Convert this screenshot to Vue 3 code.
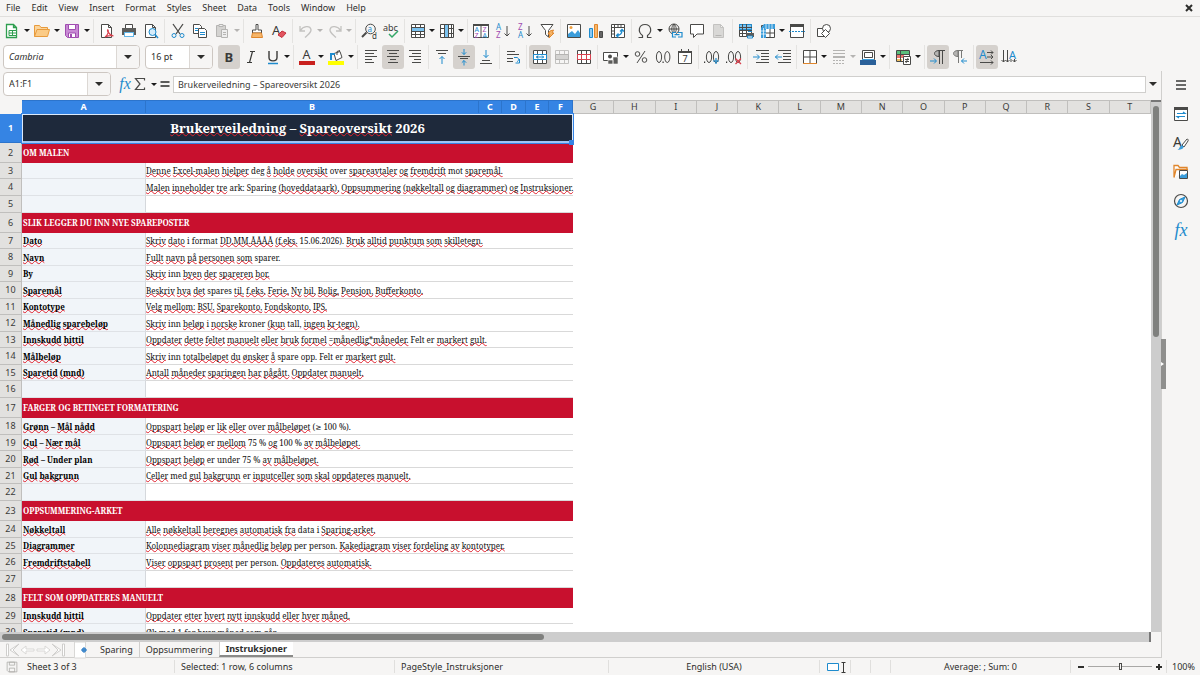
<script setup>
import { ref } from 'vue'

const menus = ['File', 'Edit', 'View', 'Insert', 'Format', 'Styles', 'Sheet', 'Data', 'Tools', 'Window', 'Help']

const g = 'fill="none" stroke="#4a4a48"'
const b = 'fill="none" stroke="#1e8bcd"'
const lines = (xs) => xs.map(([x, w], i) => `M${x} ${1.5 + i * 3}h${w}`).join('')
const grid = (c = '#4a4a48') => `<path fill="none" stroke="${c}" d="M1.5 1.5h13v13h-13zM1.5 5.5h13M1.5 10.5h13M5.5 1.5v13M10.5 1.5v13"/>`
const glyph = (t, x, y, s, c, w = 400) => `<text x="${x}" y="${y}" font-size="${s}" fill="${c}" font-weight="${w}" font-family="Noto Sans, sans-serif">${t}</text>`
const page = '<path fill="#fff" stroke="#4a4a48" d="M2.5 1.5h7l3 3v10h-10zM9.5 1.5v3h3"/>'
const arrowDown = (x) => `<path ${g} d="M${x} 3v10M${x - 2.5} 10.5l2.5 2.5 2.5-2.5"/>`

const icons = {
  new: '<path fill="#fff" stroke="#2e9e4f" stroke-width="1.3" d="M2.5 1.5h7l3 3v10h-10zM9.5 1.5v3h3"/><path fill="#fff" stroke="#2e9e4f" d="M5 7.5h7.5v5H5zM5 10h7.5M8.5 7.5v5"/>',
  open: '<path fill="#fbd49a" stroke="#e89b3c" d="M.5 13.500V2.500h5l1.500 2h6.500v2"/><path fill="#fbcb86" stroke="#e89b3c" d="M3 6.500h12.500l-2 7H.5z"/>',
  save: '<path fill="#c88ad4" stroke="#a04cb0" d="M1.500 1.500h13v13h-11l-2-2z"/><path fill="#fff" stroke="#a04cb0" d="M4.500 1.500h7v5h-7zM4.500 10h7v4.500h-7z"/><path fill="#a04cb0" d="M6 11h2v3H6z"/>',
  pdf: page + '<path fill="none" stroke="#d9414e" stroke-width="1.200" d="M6 14c3-2 4-6 3-7s-1 4 5.500 6c-3-1-6 0-8.500 1z"/>',
  print: '<path fill="#fff" stroke="#4a4a48" d="M4.500 1.500h7v4h-7z"/><path fill="#5c5c5a" d="M1 5h14v7H1z"/><path fill="#62b6e8" d="M3 9h10v5H3z"/><path fill="#fff" d="M4 10h8v3H4z"/>',
  preview: page + '<circle cx="9.500" cy="9" r="3.500" fill="#d6ecfa" stroke="#1e8bcd"/><path stroke="#1e8bcd" stroke-width="1.500" d="M12 11.500l3 3.500"/>',
  cut: `<path ${g} stroke-width="1.300" d="M3 1l7 10M13 1L6 11"/><circle cx="4" cy="12.500" r="2" ${b}/><circle cx="12" cy="12.500" r="2" ${b}/>`,
  copy: '<path fill="#fff" stroke="#4a4a48" d="M1.500 1.500h6l2 2v7h-8z"/><path fill="#fff" stroke="#4a4a48" d="M6.500 5.500h6l2 2v7h-8z"/><path stroke="#1e8bcd" d="M3 5.500h3M3 7.500h3M8 9.500h5M8 11.500h5"/>',
  paste: '<path fill="#d4d3d1" stroke="#b5b4b2" d="M2.500 2.500h9v11h-9z"/><path fill="#eee" stroke="#b5b4b2" d="M5 1.500h4v2H5zM7.500 6.500h6v8h-6z"/><path stroke="#b5b4b2" d="M9 9.500h3M9 11.500h3"/>',
  brush: '<path fill="#fff" stroke="#4a4a48" d="M7 1.500h2V7h3.500v3h-9V7H7z"/><path fill="#f6b66a" stroke="#e0862c" d="M3.500 10h9l1 4.500h-11z"/>',
  clear: `${glyph('A', 1, 12, 13, '#3a3a38')}<path fill="#e2545f" stroke="#c4303c" d="M7 12l4-4 4 2-4 4.500z"/>`,
  undo: '<path fill="none" stroke="#c3c2c0" stroke-width="1.300" d="M2 3v5h5M2.500 7.500C5 3 12 2 13 6.500c.5 3-3 5-6 8"/>',
  redo: '<path fill="none" stroke="#c3c2c0" stroke-width="1.300" d="M14 3v5H9M13.500 7.500C11 3 4 2 3 6.500c-.5 3 3 5 6 8"/>',
  find: `<circle cx="9.500" cy="6" r="4.800" ${g}/><path stroke="#4a4a48" stroke-width="2" d="M5.500 9.500L1 14"/>${glyph('a', 6.600, 8.500, 8, '#1e8bcd')}${glyph('d', 11, 15.500, 8, '#3a3a38')}`,
  spell: `${glyph('abc', 0, 7.500, 9, '#3a3a38')}<path fill="none" stroke="#33a867" stroke-width="1.500" d="M6 11l3 3 6-6"/>`,
  row: '<path fill="#fff" d="M1 1h14v14H1z"/><path fill="#7cc3f0" d="M1 4h14v5H1z"/><path fill="none" stroke="#4a4a48" d="M1.500 1.500h13v13h-13zM1.500 4.500h13M1.500 8.500h13M1.500 11.500h13M5.500 1.500v3M10.500 1.500v3M5.500 8.500v6M10.500 8.500v6"/>',
  column: '<path fill="#fff" d="M1 1h14v14H1z"/><path fill="#7cc3f0" d="M5 1h5v14H5z"/><path fill="none" stroke="#4a4a48" d="M1.500 1.500h13v13h-13zM5.500 1.500v13M9.500 1.500v13M12.500 1.500v13M1.500 5.500h4M1.500 10.500h4M9.500 5.500h5M9.500 10.500h5"/>',
  sort: `<path fill="#fff" stroke="#4a4a48" d="M.5 1.500h15v13H.5zM8 1v14"/><path fill="#4a4a48" d="M0 1h16v2H0z"/>${glyph('A', 1.500, 8.500, 7, '#1e8bcd')}${glyph('Z', 1.500, 14.500, 7, '#a04cb0')}${glyph('Z', 9.500, 8.500, 7, '#a04cb0')}${glyph('A', 9.500, 14.500, 7, '#1e8bcd')}`,
  asc: `${glyph('A', 1, 7, 8, '#1e8bcd')}${glyph('Z', 1, 15, 8, '#a04cb0')}${arrowDown(12)}`,
  desc: `${glyph('Z', 1, 7, 8, '#a04cb0')}${glyph('A', 1, 15, 8, '#1e8bcd')}${arrowDown(12)}`,
  filter: `<path fill="#fff" stroke="#4a4a48" d="M2 1.500h12L9.500 7.500V14l-3-2.500v-4z"/><path fill="#f6b66a" stroke="#e0862c" d="M11 8l3.500-1-1.500 3h2l-5 5 1-4H9z"/>`,
  image: '<path fill="#fff" stroke="#4a4a48" d="M1.500 1.500h13v13h-13z"/><path fill="#3b9ddb" d="M2 14v-3l4-3 3 3 3-4 2 3v4z"/><circle cx="5" cy="4.500" r="1.500" fill="#f0a040"/>',
  chart: '<path fill="#8cc8f0" stroke="#1e8bcd" d="M1.500 5.500h3v9h-3z"/><path fill="#f6b66a" stroke="#e0862c" d="M6.500 1.500h3v13h-3z"/><path fill="#666" stroke="#4a4a48" d="M11.500 8.500h3v6h-3z"/>',
  pivot: '<path fill="#fff" stroke="#4a4a48" d="M1.500 1.500h13v13h-13zM1.500 4.500h13M4.500 1.500v13M8 1.500v3M11 1.500v3M1.500 8h3M1.500 11h3"/><path fill="none" stroke="#1e8bcd" stroke-width="1.300" d="M6.500 12.500c4 0 5.500-2 5.500-5.500M10 8.500L12 6.500 14 8.500M8.500 10.500l-2 2 2 2"/>',
  omega: `<path ${g} stroke-width="1.200" d="M1.500 14.500h4v-2C.5 9 1.500 1.500 8 1.500s7.500 7.500 2.500 11v2h4"/>`,
  link: `<circle cx="7" cy="6" r="5" ${g}/><path ${g} d="M2 6h10M7 1v10M7 1c-3 3-3 7 0 10M7 1c3 3 3 7 0 10"/><path fill="#f6f5f4" stroke="#1e8bcd" stroke-width="1.200" d="M9 9.500H5.500v4.500H9M11 9.500h4v4.500h-4M7.500 11.700h5"/>`,
  comment: '<path fill="#fff" stroke="#4a4a48" d="M1.500 1.500h13v9.500H8l-3.500 3.500V11h-3z"/>',
  header: '<path fill="#d9d8d6" stroke="#c3c2c0" d="M2.500 1.500h7l3 3v10h-10zM9.500 1.500v3h3"/><path stroke="#b5b4b2" d="M4.500 12.500h6"/>',
  range: '<path fill="#fff" stroke="#4a4a48" d="M1.500 1.500h12v12h-12z"/><path fill="#7cc3f0" stroke="#1e8bcd" d="M1.500 1.500h12v5h-12z"/><path stroke="#4a4a48" d="M1 4.500h13M1 7.500h13M1 10.500h13M4.500 1v13M8.500 1v13"/><path fill="#5c5c5a" d="M8 10h8v4H8z"/><path fill="#fff" stroke="#1e8bcd" d="M10 8.500h4M9.500 13h5v2h-5z"/>',
  freeze: '<path fill="#fff" stroke="#4a4a48" d="M1.500 2.500h13v12h-13zM5.500 6v9M10 6v9M2 10h13"/><path fill="#3b9ddb" d="M4 1h11v5H6v9H1V5z"/><path stroke="#fff" stroke-width=".7" d="M6 1v5M9 1v5M12 1v5M1 8h5M1 11h5M3.500 5v10"/>',
  split: `<path fill="#fff" stroke="#4a4a48" d="M1.500 1.500h13v13h-13z"/><path fill="#4a4a48" d="M1 1h14v3H1z"/><path stroke="#1e8bcd" stroke-dasharray="2 1" d="M0 8.500h16"/>`,
  shapes: '<path fill="#fff" stroke="#4a4a48" d="M1.500 5.500h8v8h-8z"/><circle cx="10.500" cy="5.500" r="4" fill="#fff" stroke="#4a4a48"/><path fill="#fff" stroke="#4a4a48" d="M9.500 6.500l4 4-4 4-4-4z"/>',
  bold: glyph('B', 3.500, 13, 13, '#3a3a38', 700),
  italic: '<path fill="none" stroke="#3a3a38" stroke-width="1.200" d="M7 2.500h5M4 13.500h5M9.500 2.500l-3 11"/>',
  underline: '<path fill="none" stroke="#3a3a38" stroke-width="1.400" d="M4 2v6.500c0 4.500 8 4.500 8 0V2"/><path stroke="#1e8bcd" stroke-width="1.500" d="M3 14.500h10"/>',
  color: `${glyph('A', 3.500, 10, 12.500, '#3a3a38')}<path fill="#c9211e" d="M0 12h16v4H0z"/>`,
  highlight: '<path fill="#ffff00" d="M0 12h16v4H0z"/><path fill="#fff" stroke="#4a4a48" d="M6 4.500l6-2 2 6-6 3z"/><path fill="none" stroke="#4a4a48" d="M9 6V2.500l3-1"/><path fill="none" stroke="#1e8bcd" stroke-width="2" d="M3 11V5h4"/>',
  left: `<path ${g} d="${lines([[2, 12], [2, 9], [2, 12], [2, 7], [2, 9]])}"/>`,
  center: `<path ${g} d="${lines([[2, 12], [4, 8], [2, 12], [5, 6], [3, 10]])}"/>`,
  right: `<path ${g} d="${lines([[2, 12], [5, 9], [2, 12], [7, 7], [5, 9]])}"/>`,
  top: `<path ${g} d="M2 1.500h12M4 4.500h8"/><path ${b} d="M8 15V7.500M5.500 10L8 7.500l2.500 2.500"/>`,
  middle: `<path ${g} d="M2 7.500h12M4 9.500h8"/><path ${b} d="M8 0v5.500M5.800 3.300L8 5.500l2.200-2.200M8 16.500v-5M5.800 13.700L8 11.500l2.200 2.200"/>`,
  bottom: `<path ${g} d="M4 11.500h8M2 14.500h12"/><path ${b} d="M8 1v7.500M5.500 6L8 8.500 10.500 6"/>`,
  wrap: `<path ${g} d="M2 2.500h8M2 5.500h12M2 9.500h6M2 12.500h6"/><path ${b} d="M9 8.500h3c2 0 2 4 0 4M14.500 10v4h-4"/>`,
  merge: `<path fill="#fff" d="M1 1h14v14H1z"/>${grid()}<path fill="#fff" stroke="#1e8bcd" d="M1.500 5.500h13v5h-13zM4 8h8M6 6.500L4.500 8 6 9.500M10 6.500L11.500 8 10 9.500"/>`,
  mergeOnly: `${grid('#c3c2c0')}<path fill="#d4d3d1" stroke="#b5b4b2" d="M1.500 5.500h13v5h-13z"/>`,
  unmerge: `<path fill="#fff" d="M1 1h14v14H1z"/>${grid()}<path fill="#fff" stroke="#d9414e" d="M1.500 5.500h13v5h-13zM5.500 5.500v5M10.500 5.500v5"/>`,
  currency: '<path fill="#fff" stroke="#4a4a48" d="M.5 3.500h14v8H.5z"/><circle cx="7" cy="7.500" r="2" fill="#4a4a48"/><path fill="#5c5c5a" stroke="#f6f5f4" stroke-width=".6" d="M5 11h5v4H5zM10 8h5v7h-5z"/>',
  percent: `<circle cx="4.500" cy="5" r="2.300" ${g}/><circle cx="11.500" cy="11" r="2.300" ${g}/><path ${g} d="M12 2L4 14"/>`,
  number: `<ellipse cx="4" cy="8" rx="2.600" ry="5.500" ${g}/><ellipse cx="12.300" cy="8" rx="2.600" ry="5.500" ${g}/><path fill="#3a3a38" d="M7.500 12.500h1.200V14H7.500z"/>`,
  date: `<path fill="#fff" stroke="#4a4a48" d="M1.500 2.500h13v12h-13z"/><path fill="#4a4a48" d="M1 2h14v2H1zM4 0h1v3H4zM11 0h1v3h-1z"/>${glyph('7', 5.500, 12.500, 9, '#3a3a38')}`,
  addDecimal: `<path fill="#3a3a38" d="M0 12.500h1.200V14H0z"/><ellipse cx="5" cy="8" rx="2.600" ry="5.500" ${g}/><ellipse cx="12" cy="8" rx="2.600" ry="5.500" ${g}/><path stroke="#1e8bcd" stroke-width="1.200" d="M12 9v6M9 12h6"/>`,
  delDecimal: `<path fill="#3a3a38" d="M0 12.500h1.200V14H0z"/><ellipse cx="5" cy="8" rx="2.600" ry="5.500" ${g}/><ellipse cx="12" cy="8" rx="2.600" ry="5.500" ${g}/><path stroke="#d9414e" stroke-width="1.300" d="M9.500 9.500l5.500 5.500M15 9.500L9.500 15"/>`,
  indent: `<path ${g} d="M3 1.500h13M8 4.500h8M8 7.500h8M8 10.500h8M3 13.500h13"/><path ${b} d="M0 8h6M4 5.500L6.500 8 4 10.500"/>`,
  outdent: `<path ${g} d="M3 1.500h13M8 4.500h8M8 7.500h8M8 10.500h8M3 13.500h13"/><path ${b} d="M0 8h7M3 5.500L.5 8 3 10.500"/>`,
  borders: '<path fill="#fff" stroke="#4a4a48" d="M1.500 1.500h13v13h-13zM8 1.500v13M1.500 8h13"/><path stroke="#e0862c" d="M1 14.500h14"/>',
  lineStyle: '<path stroke="#b5b4b2" d="M2 1.500h12M2 4.500h12"/><path stroke="#b5b4b2" stroke-width="2" d="M2 8h12"/><path stroke="#b5b4b2" stroke-dasharray="2 1" d="M2 11.500h12M2 14.500h12"/>',
  borderColor: '<path fill="#fff" stroke="#4a4a48" d="M2.500 1.500h12v9h-12zM4.500 3.500h8v5h-8z"/><path fill="#2a6099" d="M0 11h16v5H0z"/><path fill="#3b9ddb" d="M2 10h12v1H2z"/>',
  conditional: '<path fill="#fff" stroke="#4a4a48" d="M1.500 1.500h13v11h-13z"/><path fill="#5bbf7c" d="M2 2h12v3H2z"/><path fill="#e8756f" d="M2 6h7v3H2z"/><path fill="#f0c060" d="M2 10h5v2H2z"/><path stroke="#4a4a48" d="M5.500 1v12M1 5.500h13"/><path fill="#fff" stroke="#4a4a48" d="M8.500 7.500h7v8h-7zM10 10.500h4M10 12.500h4M13 9l-2 5"/>',
  ltr: `<path fill="#b5b4b2" stroke="#4a4a48" d="M9 1.500c-6 0-6 6 0 6z"/><path ${g} d="M8 1.500h7M9.500 1.500V15M12.500 1.500V15"/><path ${b} d="M0 12h6M4 9.500L6.500 12 4 14.500"/>`,
  rtl: `<path fill="#b5b4b2" stroke="#7a7a78" d="M6 1.500c-6 0-6 6 0 6z"/><path fill="none" stroke="#7a7a78" d="M5 1.500h6M6.500 1.500V14M9.500 1.500V9"/><path ${b} d="M15 12H9.500M12 9.500L9.500 12l2.500 2.500"/>`,
  horizontal: `${glyph('A', 0, 10, 12, '#1e8bcd')}<path ${g} d="M8 3.500h6M8 8h6M1 13.500h13M12 1.500l2 2-2 2M12 6l2 2-2 2M12 11.500l2 2-2 2"/>`,
  vertical: `${glyph('A', 8, 10, 11, '#1e8bcd')}<path ${g} d="M2.500 1v12M6.500 1v12M13.500 10v3M10 10v3M.500 11l2 2 2-2M4.500 11l2 2 2-2M11.500 11l2 2 2-2"/>`,
  settings: '<path stroke="#3a3a38" stroke-width="1.500" d="M3 4h10M3 8h10M3 12h10"/>',
  properties: '<path fill="#fff" stroke="#4a4a48" d="M1.500 1.500h13v13h-13z"/><path fill="#4a4a48" d="M1 1h14v3H1z"/><path fill="none" stroke="#1e8bcd" stroke-width="1.200" d="M4 7.500h8l-2-1.500M12 10.500H4l2 1.500"/>',
  styles: `${glyph('A', 0, 12, 14, '#3a3a38')}<path fill="#fff" stroke="#4a4a48" d="M9 10l5-6c1 0 1.500 1 1 2l-4 6z"/><path fill="#3b9ddb" d="M4 15c3 0 2-5 5-4.500s2 4.500-5 4.500z"/>`,
  gallery: '<path fill="#fff" stroke="#e0862c" stroke-width="1.300" d="M1 13.500v-12h4l1.500 2H14v2M1 13.500l2-8h12"/><path fill="#fff" stroke="#4a4a48" d="M6.500 6.500h8v8h-8z"/><path fill="#3b9ddb" d="M7 14v-2l2-2 2 1 3-2v5z"/>',
  navigator: `<circle cx="8" cy="8" r="6.500" ${g} stroke-width="1.200"/><path fill="#3b9ddb" stroke="#1e8bcd" d="M12 4L9.500 9.500 4 12l2.500-5.500z"/><circle cx="8" cy="8" r="1" fill="#fff"/>`,
  sum: `<path ${g} stroke-width="1.200" d="M12.500 4.500v-2h-9L8 8l-4.500 5.500h9v-2"/>`,
  equals: '<path stroke="#5c5c5a" stroke-width="2" d="M3.500 6h9M3.500 10h9"/>',
  addSheet: '<path fill="#fff" stroke="#d9d8d6" d="M.5 0h11v16H.5z"/><path stroke="#2f7ec7" stroke-width="1.300" d="M10 5.500v5M7.500 8h5"/><circle cx="10" cy="8" r="2" fill="none" stroke="#2f7ec7"/>',
  disk: '<path fill="none" stroke="#a9a8a6" d="M1.500 1.500h13v13h-11l-2-2zM4.500 1.500h7v4h-7zM4.500 9.500h7v5h-7z"/>',
  first: '<path fill="#fff" stroke="#cfcecc" d="M1.500 2h2v12h-2zM14 2L5 8l9 6-6-6z"/>',
  prev: '<path fill="#fff" stroke="#d9d8d6" d="M1 8l5-4v3h8v2H6v3z"/>',
  next: '<path fill="#fff" stroke="#d9d8d6" d="M15 8l-5-4v3H2v2h8v3z"/>',
  last: '<path fill="#fff" stroke="#cfcecc" d="M12.500 2h2v12h-2zM2 2l9 6-9 6 6-6z"/>',
  selection: '<path fill="#fff" stroke="#1e8bcd" d="M.5 4.500h11v7H.5z"/><path fill="none" stroke="#3a3a38" d="M14.500 3.500h4M14.500 13.500h4M16.500 3.500v10"/>',
}

const I = (icon, label, o = {}) => ({ icon, label, ...o })
const D = (icon, label, o = {}) => I(icon, label, { drop: true, ...o })

const standard = [
  [D('new', 'New'), D('open', 'Open'), D('save', 'Save')],
  [I('pdf', 'Export as PDF'), I('print', 'Print'), I('preview', 'Print Preview')],
  [I('cut', 'Cut'), I('copy', 'Copy'), D('paste', 'Paste', { off: true })],
  [I('brush', 'Clone Formatting'), I('clear', 'Clear Formatting')],
  [D('undo', 'Undo', { off: true, snug: true }), D('redo', 'Redo', { off: true, snug: true })],
  [I('find', 'Find and Replace'), I('spell', 'Spelling')],
  [D('row', 'Row', { snug: true }), D('column', 'Column', { snug: true })],
  [I('sort', 'Sort'), I('asc', 'Sort Ascending'), I('desc', 'Sort Descending'), I('filter', 'AutoFilter')],
  [I('image', 'Insert Image'), I('chart', 'Insert Chart'), I('pivot', 'Pivot Table')],
  [D('omega', 'Special Character'), I('link', 'Hyperlink'), I('comment', 'Comment'), I('header', 'Headers and Footers', { off: true })],
  [I('range', 'Print Range'), D('freeze', 'Freeze Panes', { snug: true }), I('split', 'Split Window')],
  [I('shapes', 'Show Draw Functions')],
]

const formatting = [
  [I('bold', 'Bold', { on: true }), I('italic', 'Italic'), D('underline', 'Underline', { snug: true })],
  [D('color', 'Font Color', { snug: true }), D('highlight', 'Background Color')],
  [I('left', 'Align Left'), I('center', 'Center Horizontally', { on: true }), I('right', 'Align Right')],
  [I('top', 'Align Top'), I('middle', 'Center Vertically', { on: true }), I('bottom', 'Align Bottom')],
  [I('wrap', 'Wrap Text')],
  [I('merge', 'Merge and Center', { on: true }), I('mergeOnly', 'Merge Cells', { off: true }), I('unmerge', 'Unmerge Cells')],
  [D('currency', 'Currency'), I('percent', 'Percent'), I('number', 'Number'), I('date', 'Date')],
  [I('addDecimal', 'Add Decimal Place'), I('delDecimal', 'Delete Decimal Place')],
  [I('indent', 'Increase Indent'), I('outdent', 'Decrease Indent')],
  [D('borders', 'Borders', { snug: true }), D('lineStyle', 'Border Style', { off: true, snug: true }), D('borderColor', 'Border Color')],
  [D('conditional', 'Conditional')],
  [I('ltr', 'Left-To-Right', { on: true }), I('rtl', 'Right-To-Left')],
  [I('horizontal', 'Text Horizontal', { on: true }), I('vertical', 'Text Vertical')],
]

const sidebar = [
  I('settings', 'Sidebar Settings'), I('properties', 'Properties'), I('styles', 'Styles'),
  I('gallery', 'Gallery'), I('navigator', 'Navigator'),
]

const selectedCols = ['A', 'B', 'C', 'D', 'E', 'F']
const otherCols = 'GHIJKLMNOPQRST'.split('')

const known = new Set('deg over mot ark sparing i format sparer inn spares tall kroner spare opp felt er under data med per person by plan'.split(' '))

// Splits a text into runs and flags the words that the spelling checker underlines.
function runs(text) {
  return text.split(/(\s+)/).filter(Boolean).map((t) => {
    const word = t.toLowerCase().replace(/[^a-zæøå.\-"]/g, '').replace(/\.$/, '')
    return { t, typo: /[a-zæøå]/.test(word) && !known.has(word) }
  })
}

const rows = [
  { section: 'OM MALEN' },
  { b: 'Denne Excel-malen hjelper deg å holde oversikt over spareavtaler og fremdrift mot sparemål.' },
  { b: 'Malen inneholder tre ark: Sparing (hoveddataark), Oppsummering (nøkkeltall og diagrammer) og Instruksjoner.' },
  {},
  { section: 'SLIK LEGGER DU INN NYE SPAREPOSTER' },
  { a: 'Dato', b: 'Skriv dato i format DD.MM.ÅÅÅÅ (f.eks. 15.06.2026). Bruk alltid punktum som skilletegn.' },
  { a: 'Navn', b: 'Fullt navn på personen som sparer.' },
  { a: 'By', b: 'Skriv inn byen der spareren bor.' },
  { a: 'Sparemål', b: 'Beskriv hva det spares til, f.eks. Ferie, Ny bil, Bolig, Pensjon, Bufferkonto.' },
  { a: 'Kontotype', b: 'Velg mellom: BSU, Sparekonto, Fondskonto, IPS.' },
  { a: 'Månedlig sparebeløp', b: 'Skriv inn beløp i norske kroner (kun tall, ingen kr-tegn).' },
  { a: 'Innskudd hittil', b: 'Oppdater dette feltet manuelt eller bruk formel =månedlig*måneder. Felt er markert gult.' },
  { a: 'Målbeløp', b: 'Skriv inn totalbeløpet du ønsker å spare opp. Felt er markert gult.' },
  { a: 'Sparetid (mnd)', b: 'Antall måneder sparingen har pågått. Oppdater manuelt.' },
  {},
  { section: 'FARGER OG BETINGET FORMATERING' },
  { a: 'Grønn – Mål nådd', b: 'Oppspart beløp er lik eller over målbeløpet (≥ 100 %).' },
  { a: 'Gul – Nær mål', b: 'Oppspart beløp er mellom 75 % og 100 % av målbeløpet.' },
  { a: 'Rød – Under plan', b: 'Oppspart beløp er under 75 % av målbeløpet.' },
  { a: 'Gul bakgrunn', b: 'Celler med gul bakgrunn er inputceller som skal oppdateres manuelt.' },
  {},
  { section: 'OPPSUMMERING-ARKET' },
  { a: 'Nøkkeltall', b: 'Alle nøkkeltall beregnes automatisk fra data i Sparing-arket.' },
  { a: 'Diagrammer', b: 'Kolonnediagram viser månedlig beløp per person. Kakediagram viser fordeling av kontotyper.' },
  { a: 'Fremdriftstabell', b: 'Viser oppspart prosent per person. Oppdateres automatisk.' },
  {},
  { section: 'FELT SOM OPPDATERES MANUELT' },
  { a: 'Innskudd hittil', b: 'Oppdater etter hvert nytt innskudd eller hver måned.' },
  { a: 'Sparetid (mnd)', b: 'Øk med 1 for hver måned som går.' },
]

const title = 'Brukerveiledning – Spareoversikt 2026'
const font = ref('Cambria')
const size = ref('16 pt')
const cell = ref('A1:F1')
const formula = ref(title)
const zoom = ref(50)
</script>

<template>
  <div class="app">
    <nav class="menubar">
      <button v-for="m in menus" :key="m" type="button">{{ m }}</button>
      <button type="button" class="close" aria-label="Close"><svg viewBox="0 0 8 8"><path stroke="#2e2e2c" stroke-width="2" d="M1 1l6 6M7 1L1 7" /></svg></button>
    </nav>

    <div class="toolbar">
      <div v-for="(group, i) in standard" :key="i" class="group">
        <button v-for="t in group" :key="t.icon" type="button" class="tool" :class="{ drop: t.drop, snug: t.snug, off: t.off }" :aria-label="t.label">
          <svg class="icon" viewBox="0 0 16 16" v-html="icons[t.icon]"></svg>
          <i v-if="t.drop" class="caret"></i>
        </button>
      </div>
    </div>

    <div class="toolbar format">
      <div class="combo font">
        <input v-model="font" aria-label="Font Name" />
        <button type="button" aria-label="Show fonts"><i class="caret big"></i></button>
      </div>
      <div class="combo size">
        <input v-model="size" aria-label="Font Size" />
        <button type="button" aria-label="Show sizes"><i class="caret big"></i></button>
      </div>
      <div v-for="(group, i) in formatting" :key="i" class="group">
        <button v-for="t in group" :key="t.icon" type="button" class="tool" :class="{ drop: t.drop, snug: t.snug, off: t.off, on: t.on }" :aria-label="t.label">
          <svg class="icon" viewBox="0 0 16 16" v-html="icons[t.icon]"></svg>
          <i v-if="t.drop" class="caret"></i>
        </button>
      </div>
    </div>

    <div class="work">
      <main class="document">
        <div class="formula-bar">
          <div class="combo name">
            <input v-model="cell" aria-label="Name Box" />
            <button type="button" aria-label="Manage names"><i class="caret big"></i></button>
          </div>
          <button type="button" class="fx" aria-label="Function Wizard">fx</button>
          <button type="button" class="tool sum" aria-label="Select Function">
            <svg class="icon" viewBox="0 0 16 16" v-html="icons.sum"></svg>
            <i class="caret"></i>
          </button>
          <button type="button" class="tool equals" aria-label="Formula">
            <svg class="icon" viewBox="0 0 16 16" v-html="icons.equals"></svg>
          </button>
          <input v-model="formula" class="formula" aria-label="Input line" />
          <button type="button" class="expand" aria-label="Expand Formula Bar"><i class="caret big"></i></button>
        </div>

        <div class="sheet-area">
          <div class="sheet">
            <table>
              <colgroup>
                <col class="c-num" /><col class="c-a" /><col class="c-b" />
                <col class="c-narrow" /><col class="c-wide" /><col class="c-narrow" /><col class="c-wide" />
                <col v-for="c in otherCols" :key="c" />
              </colgroup>
              <thead>
                <tr>
                  <td class="corner"></td>
                  <th v-for="c in selectedCols" :key="c" class="selected" scope="col">{{ c }}</th>
                  <th v-for="c in otherCols" :key="c" scope="col">{{ c }}</th>
                </tr>
              </thead>
              <tbody>
                <tr class="title-row">
                  <th class="selected" scope="row">1</th>
                  <td colspan="6" class="title">
                    <span v-for="(r, i) in runs(title)" :key="i" :class="{ typo: r.typo }">{{ r.t }}</span>
                    <i class="handle"></i>
                  </td>
                  <td colspan="14"></td>
                </tr>
                <tr v-for="(row, n) in rows" :key="n" :class="{ section: row.section, blank: !row.section && !row.b }">
                  <th scope="row">{{ n + 2 }}</th>
                  <td v-if="row.section" colspan="6" class="heading">{{ row.section }}</td>
                  <template v-else>
                    <td class="label"><span v-for="(r, i) in runs(row.a || '')" :key="i" :class="{ typo: r.typo }">{{ r.t }}</span></td>
                    <td colspan="5" class="text"><span v-for="(r, i) in runs(row.b || '')" :key="i" :class="{ typo: r.typo }">{{ r.t }}</span></td>
                  </template>
                  <td colspan="14"></td>
                </tr>
              </tbody>
            </table>
          </div>
          <div class="vscroll"><i></i></div>
          <div class="hscroll"><i></i></div>
        </div>

        <div class="tabs">
          <div class="tab-nav">
            <button v-for="k in ['first', 'prev', 'next', 'last']" :key="k" type="button" :aria-label="k + ' sheet'">
              <svg class="icon" viewBox="0 0 16 16" v-html="icons[k]"></svg>
            </button>
          </div>
          <button type="button" class="add" aria-label="Add sheet"><svg class="icon" viewBox="0 0 16 16" v-html="icons.addSheet"></svg></button>
          <button type="button" class="tab">Sparing</button>
          <button type="button" class="tab">Oppsummering</button>
          <button type="button" class="tab active">Instruksjoner</button>
        </div>
      </main>

      <aside class="sidebar">
        <button v-for="s in sidebar" :key="s.icon" type="button" :aria-label="s.label">
          <svg class="icon" viewBox="0 0 16 16" v-html="icons[s.icon]"></svg>
        </button>
        <button type="button" class="fx" aria-label="Functions">fx</button>
        <button type="button" class="grip" aria-label="Hide sidebar"><i></i></button>
      </aside>
    </div>

    <footer class="status">
      <div class="first"><svg class="icon disk" viewBox="0 0 16 16" v-html="icons.disk"></svg>Sheet 3 of 3</div>
      <div>Selected: 1 row, 6 columns</div>
      <div>PageStyle_Instruksjoner</div>
      <div class="mid">English (USA)</div>
      <div class="mode"><svg viewBox="0 0 20 16" v-html="icons.selection"></svg></div>
      <div></div>
      <div></div>
      <div class="mid">Average: ; Sum: 0</div>
      <div class="zoom">
        <button type="button" aria-label="Zoom out"><svg viewBox="0 0 8 8"><path stroke="#2e2e2c" stroke-width="2" d="M1 4h6" /></svg></button>
        <input v-model="zoom" type="range" min="0" max="100" aria-label="Zoom" />
        <button type="button" aria-label="Zoom in"><svg viewBox="0 0 8 8"><path stroke="#2e2e2c" stroke-width="2" d="M1 4h6M4 1v6" /></svg></button>
      </div>
      <div class="percent">100%</div>
    </footer>
  </div>
</template>

<style>
body { background: #f6f5f4; }
</style>

<style scoped>
.app {
  display: flex;
  flex-direction: column;
  height: 100vh;
  overflow: hidden;
  background: #f6f5f4;
  color: #2e2e2c;
  font: 9px/16px "Noto Sans", sans-serif;
}
.app *, .app *::before, .app *::after { box-sizing: border-box; }
button, input { font: inherit; color: inherit; border: 0; padding: 0; background: none; min-width: 0; outline: 0; }
.icon { width: 16px; height: 16px; display: block; flex: none; overflow: visible; }

.menubar { display: flex; flex: none; height: 17px; padding-left: 6px; gap: 11px; border-bottom: 1px solid #e0dfdd; }
.menubar .close { margin-left: auto; margin-right: 7px; }
.close svg, .zoom svg { width: 8px; height: 8px; display: block; }

.toolbar { display: flex; flex: none; align-items: center; height: 27px; padding-left: 1px; }
.toolbar.format { padding: 0 0 2px 3px; }
.group { display: flex; align-items: center; }
.group + .group { margin-left: 2px; padding-left: 2px; border-left: 1px solid #e4e3e1; }
.tool { width: 22px; height: 24px; display: flex; align-items: center; padding-left: 3px; border-radius: 3px; flex: none; }
.tool.drop { width: 30px; gap: 4px; }
.tool.snug { width: 29px; gap: 3px; }
.tool.on { background: #d5d1cd; }
.caret { width: 0; height: 0; flex: none; border: 3px solid transparent; border-top: 3px solid #1a1a1a; border-bottom: 0; }
.caret.big { border-width: 4px; border-bottom: 0; border-top-color: #2e2e2c; }
.off .caret { border-top-color: #b5b4b2; }

.combo { display: flex; flex: none; height: 24px; background: #fff; border: 1px solid #cdc7c2; border-radius: 4px; overflow: hidden; }
.combo input { flex: 1; padding-left: 5px; }
.combo button { width: 23px; background: #f6f5f4; border-left: 1px solid #dcd8d4; display: flex; align-items: center; justify-content: center; }
.combo.font { width: 137px; margin-right: 5px; }
.combo.font input { font-style: italic; }
.combo.size { width: 68px; margin-right: 5px; }
.combo.name { width: 108px; margin-right: 7px; }

.work { display: flex; flex: 1; min-height: 0; }
.document { flex: 1; min-width: 0; display: flex; flex-direction: column; border-right: 1px solid #d0cfcd; }
.formula-bar { display: flex; align-items: center; flex: none; height: 29px; padding: 0 4px 3px 3px; }
.fx { color: #1e8bcd; font: italic 16px/20px "Liberation Serif", serif; width: 14px; }
.formula-bar .tool { padding-left: 0; }
.tool.sum { width: 25px; gap: 3px; }
.tool.equals { width: 16px; }
.formula { flex: 1; height: 17px; background: #fff; border: 1px solid #d0cfcd; padding-left: 4px; color: #3a3a38; }
.expand { width: 11px; display: flex; justify-content: flex-end; }

.sheet-area { flex: 1; min-height: 0; display: grid; grid-template: minmax(0, 1fr) 10px / minmax(0, 1fr) 10px; }
.sheet { overflow: hidden; background: #fff; }
.vscroll { background: #cdcdcd; padding: 4px 2px 0; border-top: 2px solid #777; }
.vscroll i { display: block; width: 6px; height: 44%; border-radius: 3px; background: #7f807e; }
.hscroll { background: #cdcdcd; padding: 2px; border-right: 2px solid #777; }
.hscroll i { display: block; width: 47.3%; height: 6px; border-radius: 3px; background: #7f807e; }

table { table-layout: fixed; width: 100%; border-collapse: separate; border-spacing: 0; }
.c-num { width: 22px; }
.c-a { width: 124px; }
.c-b { width: 333px; }
.c-narrow { width: 23px; }
.c-wide { width: 24px; }
th, td { padding: 0; height: inherit; white-space: nowrap; }
tr { height: 17px; line-height: 15px; }
th { background: #e2e1df; border-right: 1px solid #c0bfbd; border-bottom: 1px solid #c0bfbd; font-weight: 400; line-height: 12px; text-align: center; color: #3a3a38; }
thead tr { height: 14px; }
thead th { border-top: 1px solid #c0bfbd; }
th.selected { background: #3584e4; color: #fff; font-weight: 700; border-color: #2c74cc; }
.corner { background: #f6f5f4; }
tbody tr:nth-child(odd) { height: 16px; line-height: 14px; }
tbody tr.blank { height: 17px; }
tbody tr.title-row { height: 29px; line-height: 26px; }
tbody tr.section { height: 20px; line-height: 18px; }
tbody td { font-family: "Noto Serif", "DejaVu Serif Condensed", "DejaVu Serif", serif; font-size: 8px; }
td.title { position: relative; background: #1e293b; color: #fff; font-size: 13px; font-weight: 700; text-align: center; border: 1px solid #dce9fa; border-bottom: 2px solid #9fc5f5; outline: 1px solid #3584e4; }
.handle { position: absolute; right: -2px; bottom: -4px; width: 5px; height: 5px; background: #3584e4; }
td.heading { background: #c8102e; color: #fff; font-weight: 700; padding-left: 1px; }
td.label { background: #f1f5f9; color: #000; font-weight: 700; padding-left: 1px; border-right: 1px solid #d5d8dc; border-bottom: 1px solid #dfe2e6; }
td.text { color: #111; border-bottom: 1px solid #d9d9d9; }
td span { white-space: pre; }
.typo { text-decoration: underline wavy #e0202c 1px; text-underline-offset: -1px; text-decoration-skip-ink: none; }

.tabs { display: flex; flex: none; height: 16px; border-bottom: 1px solid #d0cfcd; line-height: 14px; }
.tab-nav { display: flex; padding-left: 5px; width: 74px; }
.tab-nav button { width: 15px; }
.add { width: 16px; margin-right: 4px; }
.tab { padding: 0 6px; }
.tab + .tab { border-left: 1px solid #d0cfcd; }
.tab.active { background: #fff; font-weight: 700; border-bottom: 2px solid #8a8a88; }

.sidebar { position: relative; flex: none; width: 38px; display: flex; flex-direction: column; align-items: center; gap: 13px; padding-top: 6px; }
.sidebar .fx { font-size: 18px; line-height: 16px; width: 16px; }
.grip { position: absolute; left: -1px; top: 268px; width: 5px; height: 50px; background: #8f8f8d; }
.grip i { display: block; width: 0; height: 0; border: 2px solid transparent; border-left: 3px solid #fff; border-right: 0; }

.status { display: grid; flex: none; grid-template-columns: 175fr 220fr 214fr 211fr 31px 20px 20px 180fr 96px 33px; height: 17px; align-items: center; }
.status > div { display: flex; align-items: center; height: 13px; border-right: 1px solid #e0dfdd; padding-left: 6px; white-space: nowrap; }
.status > .first { gap: 9px; }
.disk { width: 12px; height: 12px; }
.status > .mid { justify-content: center; padding-left: 0; }
.status > .mode { padding-left: 7px; }
.mode svg { width: 20px; height: 16px; flex: none; }
.status > .zoom { padding: 0 3px 0 6px; gap: 3px; }
.zoom input { -webkit-appearance: none; appearance: none; flex: 1; height: 13px; margin: 0; background: linear-gradient(#a9a8a6, #a9a8a6) center / 100% 1px no-repeat; }
.zoom input::-webkit-slider-thumb { -webkit-appearance: none; width: 3px; height: 7px; background: #f6f5f4; border: 1px solid #4a4a48; }
.status > .percent { border: 0; padding-left: 5px; }
</style>
